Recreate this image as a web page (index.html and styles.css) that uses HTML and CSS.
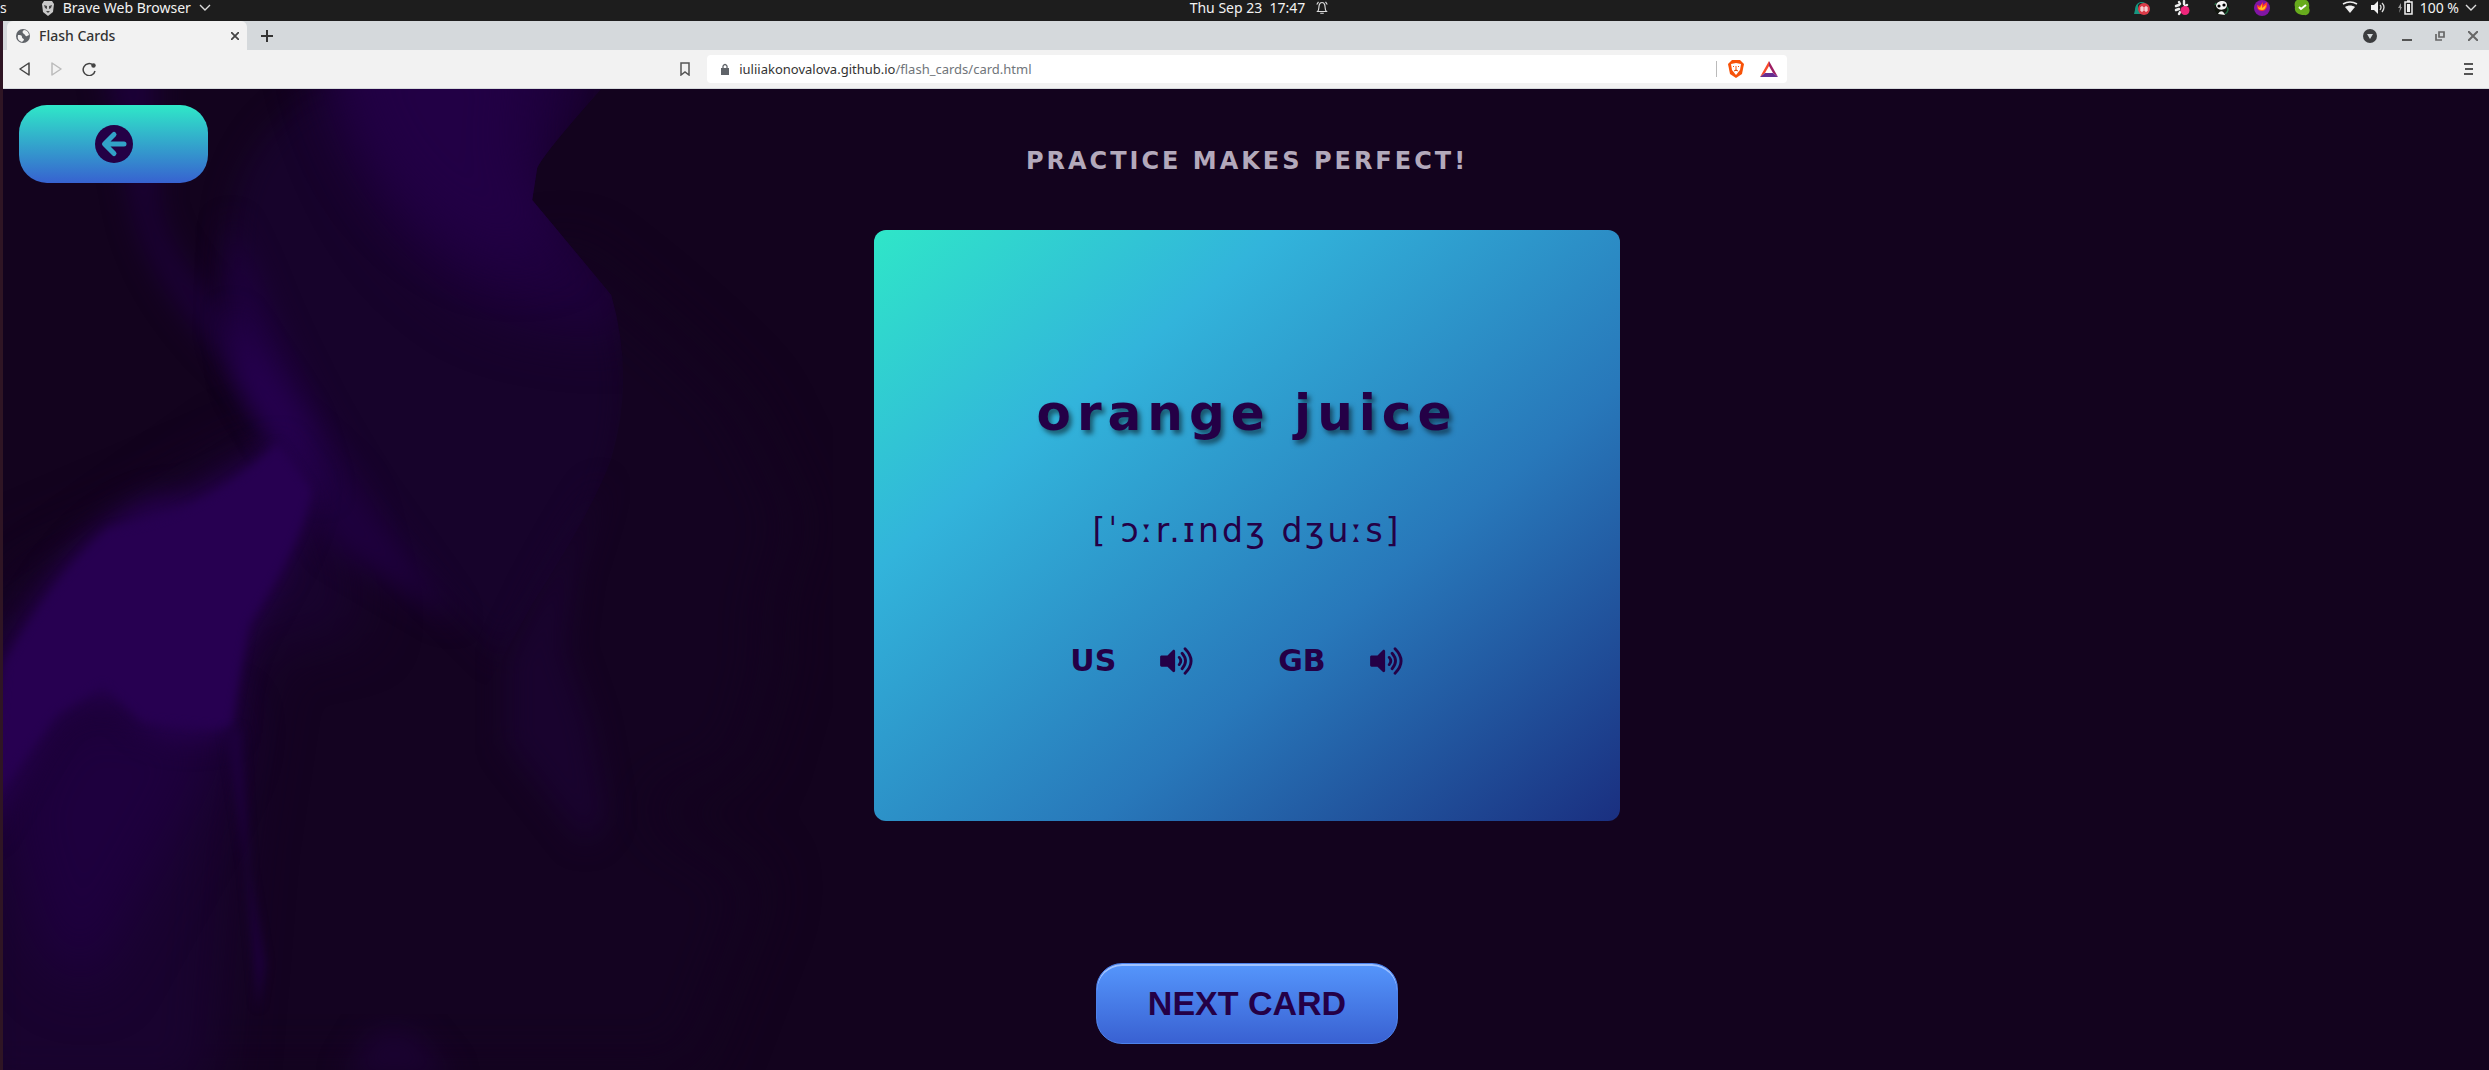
FILE: index.html
```html
<!DOCTYPE html>
<html lang="en">
<head>
<meta charset="utf-8">
<title>Flash Cards</title>
<link rel="stylesheet" href="styles.css">
</head>
<body>
<header class="system-bar">
  <div class="system-left">
    <span class="activities">s</span>
    <button class="system-item" type="button">
      <svg class="icon-lion" viewBox="0 0 14 16"><path d="M3 1h8l2 3-1 8-5 4-5-4-1-8z" fill="#c9c9c9"/><path d="M3 5l3 1v3L4 8zM11 5L8 6v3l2-1zM5 11h4l-2 2z" fill="#444"/></svg>
      <span>Brave Web Browser</span>
      <svg class="icon-chevron" viewBox="0 0 12 8"><path d="M1 1l5 5 5-5" fill="none" stroke="#ddd" stroke-width="1.4"/></svg>
    </button>
  </div>
  <div class="system-clock">
    <time>Thu Sep 23&nbsp; 17:47</time>
    <svg class="icon-14" viewBox="0 0 14 16"><path d="M2 12c2-2 1-5 2-8s5-3 6 0 0 6 2 8zM5 14h4M1 4l2-3M13 4l-2-3" fill="none" stroke="#ddd" stroke-width="1.3"/></svg>
  </div>
  <div class="tray">
    <div class="tray-apps">
      <svg class="icon-16" viewBox="0 0 16 16"><path d="M0 14l1-4C1 0 12 0 13 6l-1 8z" fill="#16967f"/><path d="M4 6c0-4 6-4 6 0v3H4z" fill="#1d1d1d"/><circle cx="10" cy="9" r="6" fill="#db3b48"/><path d="M7 7h2v4H7zM11 7h2v4h-2zM7 9h2M11 9h2" fill="none" stroke="#fff"/></svg>
      <svg class="icon-16" viewBox="0 0 16 16"><path d="M5 2l1 2M2 6l3-1M10 1v3M13 5l-2 1M2 10l3-1M5 14l1-2" fill="none" stroke="#eee" stroke-width="2.400" stroke-linecap="round"/><circle cx="11" cy="10.500" r="4.500" fill="#f0267b"/></svg>
      <svg class="icon-16" viewBox="0 0 16 16"><circle cx="8" cy="8" r="7.500" fill="#12160f"/><path d="M2 6c0-6 11-7 11-1 0 6-10 6-11 1M4 14c3-5 6-2 7 1z" fill="#f4f4f4"/><circle cx="5" cy="6" r="1.600"/><circle cx="10" cy="5" r="1.600"/><path d="M1 5l1-2M13 7c2 2 1 5-2 7" stroke="#256d45" fill="none" stroke-width="1.500"/></svg>
      <svg class="icon-16" viewBox="0 0 16 16"><circle cx="8" cy="8" r="8" fill="#8115a4"/><path d="M3 5l3 1 3-4v3l4-3c1 6-2 9-5 9-4 0-5-3-5-6" fill="#ff3b2c"/><path d="M4 7l2 1 2-4v4l4-3c0 3-2 5-4 5-2 0-4-1-4-3" fill="#ffc21d"/></svg>
      <svg class="icon-16" viewBox="0 0 16 16"><path d="M3 0h8c3 0 5 3 4 8 2 4-1 8-5 7C4 15 0 12 1 7c-1-3 0-6 2-7" fill="#67ab1d"/><path d="M5 7l2 2 5-4" fill="none" stroke="#fff" stroke-width="2"/></svg>
    </div>
    <button class="tray-status" type="button">
      <svg class="icon-16" viewBox="0 0 16 16"><path d="M1 4c5-3 9-3 14 0" fill="none" stroke="#eee" stroke-width="1.500"/><path d="M3 7c3-2 7-2 10 0L8 13z" fill="#eee"/></svg>
      <svg class="icon-16" viewBox="0 0 16 16"><path d="M1 5h3l4-4v13l-4-4H1z" fill="#f2f2f2"/><path d="M10 5q2 2 0 5M12 3q4 4 0 9" fill="none" stroke="#ddd" stroke-width="1.300"/></svg>
      <svg class="icon-16" viewBox="0 0 16 16"><path d="M3 3L0 8h2l-1 5 3-6H3z" fill="#999"/><path d="M7 2h7v12H7zM9 1h3" fill="none" stroke="#eee" stroke-width="1.500"/><path d="M9 4h3v8H9z" fill="#eee"/></svg>
      <span>100 %</span>
      <svg class="icon-chevron" viewBox="0 0 12 8"><path d="M1 1l5 5 5-5" fill="none" stroke="#ddd" stroke-width="1.400"/></svg>
    </button>
  </div>
</header>
<div class="browser">
  <div class="tab-strip">
    <div class="tab">
      <svg class="icon-14" viewBox="0 0 14 14"><circle cx="7" cy="7" r="7" fill="#5f6368"/><path d="M2 6c2 0 4 0 4 2s2 1 2 3l-2 2C3 12 1 10 2 6M8 1c-2 1-2 3 0 4s1 3 3 2l2-1c0-2-2-5-5-5" fill="#f2f2f2"/></svg>
      <span class="tab-title">Flash Cards</span>
      <button class="tool" type="button" aria-label="Close tab"><svg class="icon-8" viewBox="0 0 8 8"><path d="M0 0l8 8M8 0L0 8" stroke="#444" stroke-width="1.800"/></svg></button>
    </div>
    <button class="tool new-tab" type="button" aria-label="New tab"><svg class="icon-12" viewBox="0 0 12 12"><path d="M6 0v12M0 6h12" stroke="#333" stroke-width="2"/></svg></button>
    <div class="window-controls">
      <button class="tool search-tabs" type="button" aria-label="Search tabs"><svg class="icon-14" viewBox="0 0 14 14"><circle cx="7" cy="7" r="7" fill="#3b3c3e"/><path d="M4 5h6l-3 5z" fill="#d5d9dc"/></svg></button>
      <button class="tool" type="button" aria-label="Minimize"><svg class="icon-10" viewBox="0 0 10 10"><path d="M0 9h10" stroke="#555" stroke-width="2"/></svg></button>
      <button class="tool" type="button" aria-label="Restore"><svg class="icon-10" viewBox="0 0 10 10"><path d="M4 1h5v5H4zM1 3v6h6" fill="none" stroke="#666" stroke-width="1.700"/></svg></button>
      <button class="tool" type="button" aria-label="Close"><svg class="icon-10" viewBox="0 0 10 10"><path d="M0 0l10 10M10 0L0 10" stroke="#666" stroke-width="2"/></svg></button>
    </div>
  </div>
  <div class="toolbar">
    <div class="nav-tools">
      <button class="tool" type="button" aria-label="Back"><svg class="icon-14" viewBox="0 0 14 14"><path d="M11 1v12L2 7z" fill="none" stroke="#444" stroke-width="1.500" stroke-linejoin="round"/></svg></button>
      <button class="tool" type="button" aria-label="Forward"><svg class="icon-14" viewBox="0 0 14 14"><path d="M2 1v12l9-6z" fill="none" stroke="#bbb" stroke-width="1.500" stroke-linejoin="round"/></svg></button>
      <button class="tool" type="button" aria-label="Reload"><svg class="icon-14" viewBox="0 0 14 14"><path d="M11 3a6 6 0 1 0 2 6" fill="none" stroke="#444" stroke-width="1.500"/><circle cx="11.500" cy="3.500" r="2.200" fill="#444"/></svg></button>
    </div>
    <div class="address-group">
      <button class="tool" type="button" aria-label="Bookmark"><svg class="icon-14" viewBox="0 0 14 14"><path d="M3 1h8v12l-4-3-4 3z" fill="none" stroke="#555" stroke-width="1.500"/></svg></button>
      <div class="address">
        <svg class="icon-12" viewBox="0 0 12 12"><path d="M2 5h8v7H2z" fill="#5f6368"/><path d="M4 5V3q2-3 4 0v2" fill="none" stroke="#5f6368" stroke-width="1.300"/></svg>
        <a class="url" href="#">iuliiakonovalova.github.io<span class="path">/flash_cards/card.html</span></a>
        <span class="divider"></span>
        <svg class="icon-shield" viewBox="0 0 16 18"><path d="M4 0h8l4 4-2 10-6 4-6-4L0 4z" fill="#f75208"/><path d="M3 4l5-1 5 1-1 6-4 5-4-5z" fill="#fff"/><path d="M5 6l1 1M11 6l-1 1M8 6v4M6 11l2-1 2 1" stroke="#f75208"/></svg>
        <svg class="icon-18" viewBox="0 0 18 16"><path d="M9 0L0 16l5-4 4-7z" fill="#f74a2d"/><path d="M9 0l9 16-5-4-4-7z" fill="#9e1f63"/><path d="M0 16h18l-5-4H5z" fill="#662d91"/></svg>
      </div>
    </div>
    <button class="tool menu" type="button" aria-label="Menu"><svg class="icon-12" viewBox="0 0 12 12"><path d="M1 1h9M2 6h8M1 11h9" stroke="#555" stroke-width="2"/></svg></button>
  </div>
  <main class="page">
    <svg class="backdrop" viewBox="0 0 830 981" preserveAspectRatio="none" aria-hidden="true">
      <defs>
        <filter id="haze" x="-30%" y="-30%" width="160%" height="160%" color-interpolation-filters="sRGB"><feGaussianBlur stdDeviation="28"/></filter>
        <filter id="soft" x="-30%" y="-30%" width="160%" height="160%" color-interpolation-filters="sRGB"><feGaussianBlur stdDeviation="14"/></filter>
        <filter id="crisp" x="-30%" y="-30%" width="160%" height="160%" color-interpolation-filters="sRGB"><feGaussianBlur stdDeviation="5"/></filter>
        <clipPath id="figure"><path d="M0-40H640L598 0Q540 65 534 79L529 111Q570 160 608 206Q632 290 608 370Q590 420 529 515L460 640L300 981H0z"/></clipPath>
      </defs>
      <path d="M560 160Q680 250 741 319L800 439Q760 500 772 571L740 680L640 717L760 792L688 981H0V480L300 350z" fill="#140321" filter="url(#haze)"/>
      <g clip-path="url(#figure)">
        <path d="M323 0Q240 40 228 130L222 224Q230 270 290 340L400 470L500 570Q640 400 620 270L608 206L529 111L534 79L598 0z" fill="#17032b" filter="url(#soft)"/>
        <path d="M315-60H620L534 90L625 200L630 240Q500 240 450 193Q350 120 315-60" fill="#1e003c" filter="url(#haze)"/>
        <path d="M330-60H530L515 70L555 130Q560 180 490 165Q350 110 330-60" fill="#220045" filter="url(#haze)"/>
      </g>
      <path d="M254 350L330 420L360 540L260 560L230 760L210 1010H-40V560z" fill="#19032f" filter="url(#haze)"/>
      <path d="M100-30H153V117Q165 170 222 224L275 330L228 275Q140 190 128 100z" fill="#1c0038" filter="url(#soft)"/>
      <path d="M226 130L250 180Q300 310 370 414L455 534Q380 490 328 458L270 351L222 250z" fill="#1e003d" filter="url(#soft)"/>
      <path d="M226 220Q260 270 300 330L325 410L270 351L236 295z" fill="#260050" filter="url(#soft)"/>
      <path d="M60 610L225 635L185 720L85 900L40 860L0 720z" fill="#1e003e" filter="url(#haze)"/>
      <path d="M-20 620Q40 480 106 433Q150 400 180 410Q230 390 275 354L308 401Q300 450 249 534Q225 580 227 644Q170 660 138 635Q110 590 53 628L-20 750z" fill="#270051" filter="url(#soft)"/>
      <path d="M2 575Q50 490 106 440Q200 430 275 354L308 401Q300 450 245 534L227 640L140 632L100 595L53 625L-10 710z" fill="#270051" filter="url(#crisp)"/>
      <path d="M222 640H238L246 780L262 875L255 920L243 780z" fill="#1d003c" filter="url(#crisp)"/>
      <path d="M600 390Q550 470 529 515L503 570V654L582 755L604 729L587 635L561 559L571 483z" fill="#19032e" filter="url(#soft)"/>
      <path d="M340 990L370 940H410L450 990z" fill="#1a0230" filter="url(#soft)"/>
    </svg>
    <a class="back" href="#" aria-label="Back"><svg class="icon-back" viewBox="0 0 38 38"><circle cx="19" cy="19" r="19" fill="#240046"/><path d="M19 9.500L9.500 19l9.500 9.500M10 19h19" fill="none" stroke="#32a2c8" stroke-width="5" stroke-linecap="round" stroke-linejoin="round"/></svg></a>
    <h1 class="headline">PRACTICE MAKES PERFECT!</h1>
    <section class="card">
      <h2 class="word">orange juice</h2>
      <p class="phonetic">[ˈɔːr.ɪndʒ dʒuːs]</p>
      <div class="voices">
        <div class="voice"><span>US</span><button class="speak" type="button" aria-label="Play US"><svg class="icon-speaker" viewBox="0 0 576 512"><path d="M215 71L126 160H24c-13 0-24 11-24 24v144c0 13 11 24 24 24h102l89 89c15 15 41 4 41-17V88c0-21-26-32-41-17z"/><path d="M326 194q54 62 0 124M375 124q116 132 0 264M425 48q206 208 0 416" fill="none" stroke="#240046" stroke-width="48" stroke-linecap="round"/></svg></button></div>
        <div class="voice"><span>GB</span><button class="speak" type="button" aria-label="Play GB"><svg class="icon-speaker" viewBox="0 0 576 512"><path d="M215 71L126 160H24c-13 0-24 11-24 24v144c0 13 11 24 24 24h102l89 89c15 15 41 4 41-17V88c0-21-26-32-41-17z"/><path d="M326 194q54 62 0 124M375 124q116 132 0 264M425 48q206 208 0 416" fill="none" stroke="#240046" stroke-width="48" stroke-linecap="round"/></svg></button></div>
      </div>
    </section>
    <button class="next" type="button">NEXT CARD</button>
  </main>
</div>
</body>
</html>
```

FILE: styles.css
```css
* { box-sizing: border-box; }
body {
  margin: 0;
  min-height: 100vh;
  display: flex;
  flex-direction: column;
  background: #13031e;
  font-family: "Noto Sans", sans-serif;
  font-size: 14px;
}
button { border: 0; padding: 0; background: none; font: inherit; color: inherit; }
svg { display: block; flex: none; }
.icon-8 { width: 8px; height: 8px; }
.icon-10 { width: 10px; height: 10px; }
.icon-12 { width: 12px; height: 12px; }
.icon-14 { width: 14px; height: 14px; }
.icon-16 { width: 16px; height: 16px; }
.icon-18 { width: 18px; height: 16px; }
.icon-shield { width: 16px; height: 18px; }
.icon-lion { width: 14px; height: 16px; }
.icon-chevron { width: 12px; height: 8px; }
.icon-back { width: 38px; height: 38px; }
.icon-speaker { width: 34px; height: 30px; fill: #240046; }

.system-bar {
  height: 21px;
  display: grid;
  grid-template-columns: 1fr auto 1fr;
  align-items: center;
  background: #1d1d1d;
  color: #f2f2f2;
  line-height: 16px;
  padding-bottom: 5px;
}
.system-left, .system-item, .system-clock, .tray, .tray-apps, .tray-status { display: flex; align-items: center; }
.system-left { gap: 34px; }
.system-item { gap: 8px; }
.system-clock { gap: 10px; padding-left: 30px; }
.tray { justify-content: flex-end; gap: 26px; padding-right: 12px; }
.tray-apps { gap: 24px; }
.tray-status { gap: 6px; }
.tray-status .icon-16 { margin-left: 6px; }

.browser {
  flex: 1;
  display: flex;
  flex-direction: column;
  border-left: 3px solid #2f1524;
}
.tab-strip {
  height: 29px;
  display: flex;
  align-items: center;
  background: #d5d9dc;
  padding-left: 4px;
}
.tab {
  width: 240px;
  height: 29px;
  display: flex;
  align-items: center;
  gap: 9px;
  padding: 0 8px 0 9px;
  border-radius: 6px 6px 0 0;
  background: #f2f2f2;
  color: #333;
}
.tab-title { flex: 1; font-weight: 500; }
.tool { display: flex; align-items: center; justify-content: center; }
.new-tab { margin-left: 14px; }
.window-controls { display: flex; gap: 23px; margin-left: auto; padding-right: 11px; }
.search-tabs { margin-right: 2px; }
.toolbar {
  height: 39px;
  display: grid;
  grid-template-columns: 27% 45% 1fr;
  align-items: center;
  background: #f2f2f2;
  border-bottom: 1px solid #d5d9dc;
}
.nav-tools { display: flex; gap: 18px; padding-left: 15px; }
.address-group { display: flex; align-items: center; gap: 15px; padding: 0 6px 0 4px; }
.address {
  flex: 1;
  height: 28px;
  display: flex;
  align-items: center;
  gap: 8px;
  padding: 0 9px 0 12px;
  border-radius: 4px;
  background: #fff;
}
.url { flex: 1; color: #333; text-decoration: none; font-size: 13px; }
.path { color: #70757a; }
.divider { width: 1px; height: 16px; background: #bbb; }
.icon-shield { margin: 0 8px 0 3px; }
.menu { justify-self: end; padding-right: 14px; }

.page {
  flex: 1;
  position: relative;
  display: flex;
  flex-direction: column;
  align-items: center;
  padding: 16px 0 26px 2px;
  font-family: "DejaVu Sans", sans-serif;
  color: #240046;
  isolation: isolate;
  overflow: hidden;
}
.backdrop { position: absolute; inset: 0 auto 0 0; width: 33.4%; height: 100%; z-index: -1; }
.back {
  align-self: flex-start;
  width: 189px;
  height: 78px;
  margin-left: 14px;
  display: flex;
  align-items: center;
  justify-content: center;
  border-radius: 28px;
  background: linear-gradient(#2fe8c8, #3762d0);
}
.headline {
  margin: -38px 0 53px;
  font-size: 24px;
  line-height: 32px;
  letter-spacing: 3px;
  color: #b3a9bb;
}
.card {
  width: 30%;
  min-height: 591px;
  display: flex;
  flex-direction: column;
  align-items: center;
  padding: 147px 16px 120px;
  border-radius: 12px;
  background: linear-gradient(140deg, #2fe6c8, #32b4db 28%, #2878ba 64%, #1a2f80);
}
.word {
  margin: 0 0 58px;
  font-size: 50px;
  line-height: 72px;
  letter-spacing: 6px;
  text-shadow: 3px 4px 5px rgba(0, 0, 0, .5);
}
.phonetic { margin: 0 0 88px; font-size: 33px; line-height: 48px; letter-spacing: 3px; }
.voices { display: flex; gap: 84px; padding-right: 20px; font-size: 30px; line-height: 36px; font-weight: bold; }
.voice { display: flex; align-items: center; gap: 44px; }
.next {
  width: 302px;
  height: 81px;
  margin-top: auto;
  border: 1px solid #4d82ea;
  border-radius: 26px;
  background: linear-gradient(#5596fc, #3961d2);
  box-shadow: inset 0 2px 0 #a0c3ff;
  color: #240046;
  font: bold 34px "Liberation Sans", Arial, sans-serif;
}
```
